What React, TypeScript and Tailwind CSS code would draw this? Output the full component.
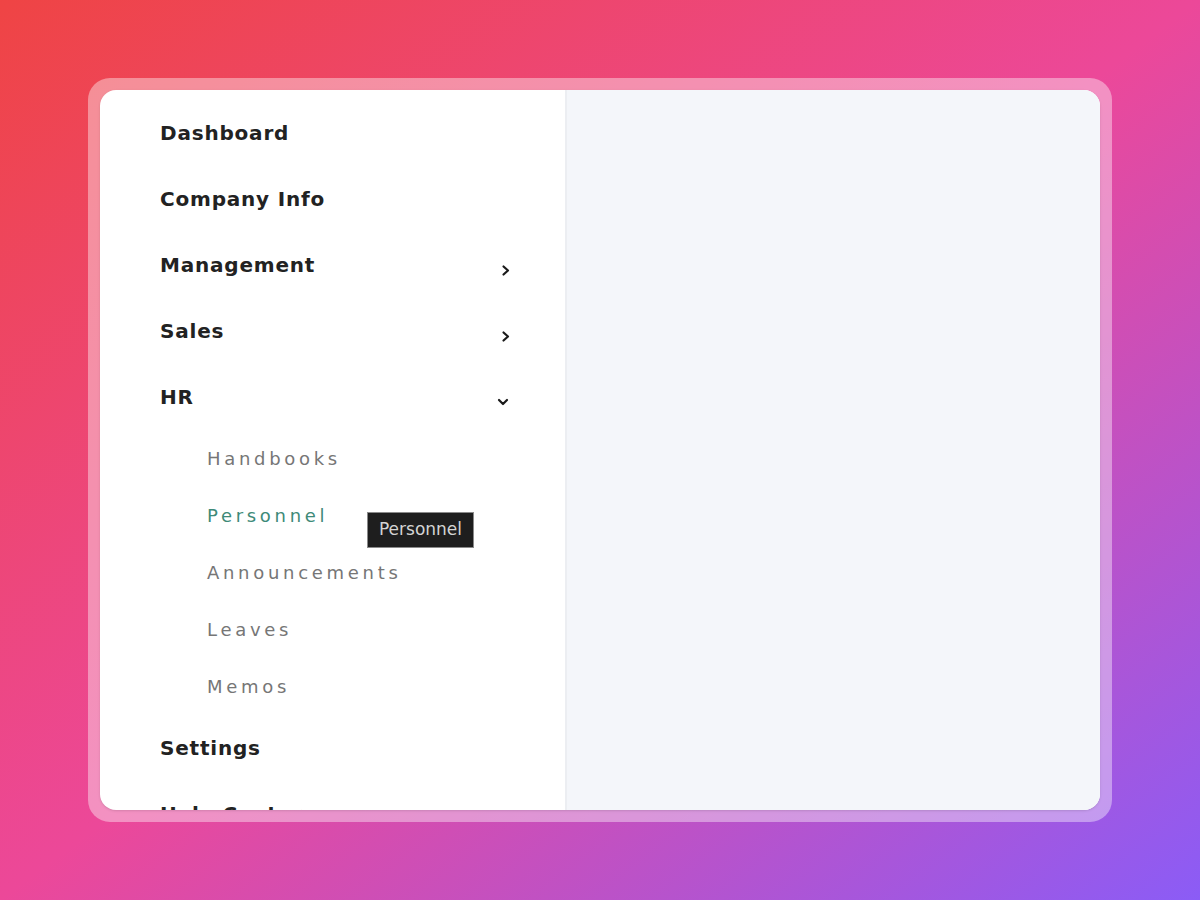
import React from "react";

type NavItem = {
  label: string;
  chevron?: "right" | "down";
};

const topItems: NavItem[] = [
  { label: "Dashboard" },
  { label: "Company Info" },
  { label: "Management", chevron: "right" },
  { label: "Sales", chevron: "right" },
  { label: "HR", chevron: "down" },
];

const hrItems = ["Handbooks", "Personnel", "Announcements", "Leaves", "Memos"];

const bottomItems: NavItem[] = [{ label: "Settings" }, { label: "Help Center" }];

const Chevron: React.FC<{ dir: "right" | "down" }> = ({ dir }) => (
  <svg
    className={dir === "right" ? "w-[10px] h-[13px] mt-[10px]" : "w-[14px] h-[10px] mt-[10px] mr-[1px]"}
    viewBox={dir === "right" ? "0 0 10 13" : "0 0 14 10"}
    fill="none"
    stroke="#1a1a1a"
    strokeWidth="2.2"
    strokeLinecap="round"
    strokeLinejoin="round"
  >
    {dir === "right" ? <path d="M2.5 2.5l4.5 4-4.5 4" /> : <path d="M3 3l4 4 4-4" />}
  </svg>
);

const TopRow: React.FC<{ item: NavItem }> = ({ item }) => (
  <div className="h-[66px] shrink-0 flex items-center justify-between pl-[60px] pr-[54px] cursor-pointer">
    <span className="text-[20px] font-bold tracking-[0.8px] text-[#222222] whitespace-nowrap">{item.label}</span>
    {item.chevron && <Chevron dir={item.chevron} />}
  </div>
);

export default function App() {
  return (
    <div className="w-[1200px] h-[900px] bg-linear-to-br/srgb from-[#ef4444] via-[#ec4899] to-[#8b5cf6] flex items-center justify-center">
      <div className="p-[12px] rounded-[22px] bg-white/40">
        <div className="w-[1000px] h-[720px] rounded-[16px] overflow-hidden bg-white flex shadow-sm">
          <aside
            className="relative w-[467px] shrink-0 border-r-2 border-[#eceef2] pt-[10px] flex flex-col"
            style={{ fontFamily: '"DejaVu Sans", sans-serif' }}
          >
            {topItems.map((item) => (
              <TopRow key={item.label} item={item} />
            ))}
            {hrItems.map((label) => (
              <div
                key={label}
                className={
                  "h-[57px] shrink-0 flex items-center pl-[107px] text-[18px] tracking-[3.7px] cursor-pointer " +
                  (label === "Personnel" ? "text-[#3e8a78]" : "text-[#767676]")
                }
              >
                {label}
              </div>
            ))}
            {bottomItems.map((item) => (
              <TopRow key={item.label} item={item} />
            ))}

            {/* hover tooltip */}
            <div className="absolute left-[267px] top-[422px] w-[107px] h-[36px] bg-[#1e1e1e] border border-[#8a8a8a] flex items-center justify-center text-[17px] text-[#d4d4d4]">
              Personnel
            </div>
          </aside>
          <main className="flex-1 bg-[#f4f6fa]" />
        </div>
      </div>
    </div>
  );
}
